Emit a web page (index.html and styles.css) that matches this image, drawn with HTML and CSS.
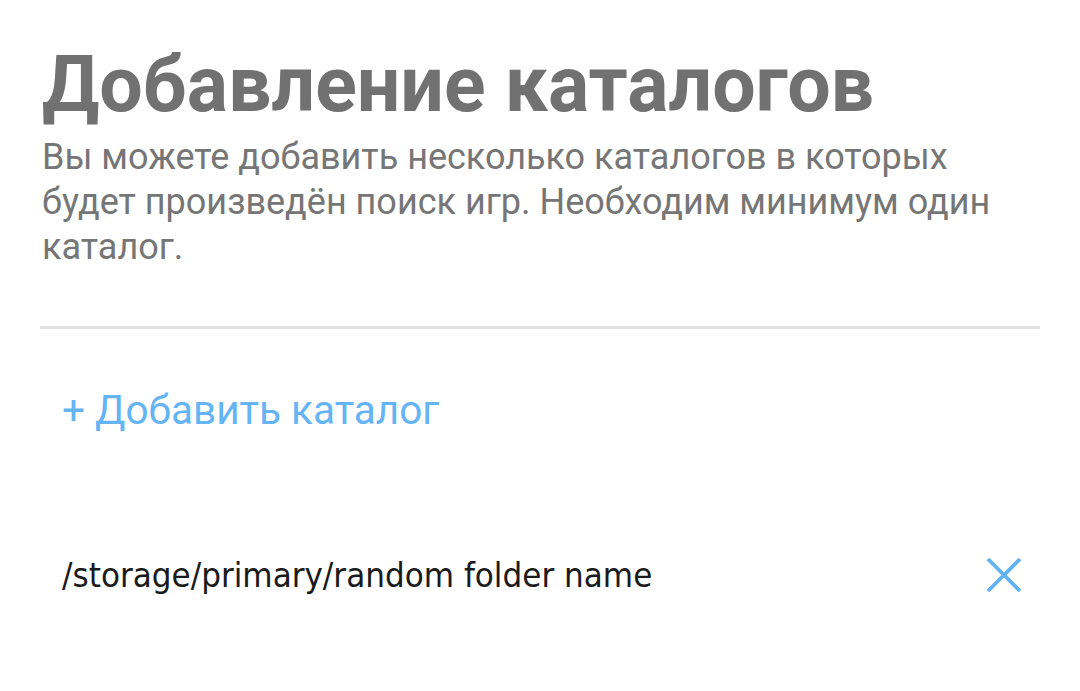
FILE: index.html
```html
<!DOCTYPE html>
<html lang="ru">
<head>
<meta charset="utf-8">
<link rel="stylesheet" href="styles.css">
</head>
<body>
<main class="page">
  <header class="head">
    <h1 class="title">Добавление каталогов</h1>
    <p class="desc">Вы можете добавить несколько каталогов в которых будет произведён поиск игр. Необходим минимум один каталог.</p>
  </header>
  <hr class="divider">
  <button class="add">+ Добавить каталог</button>
  <ul class="list">
    <li class="item">
      <span class="path">/storage/primary/random folder name</span>
      <button class="remove" aria-label="Удалить">
        <svg width="36" height="36" viewBox="0 0 36 36"><path d="M2 2 L34 34 M34 2 L2 34" stroke="#62b2f4" stroke-width="3.8" fill="none"/></svg>
      </button>
    </li>
  </ul>
</main>
</body>
</html>
```

FILE: styles.css
```css
* { box-sizing: border-box; }
html, body { margin: 0; padding: 0; background: #fff; }
body { font-family: Roboto, "Noto Sans", sans-serif; }
.page { padding: 40px 40px 0 40px; }
.head { padding-left: 2px; }
.title {
  margin: 0;
  font-size: 77px;
  font-weight: 700;
  color: #717171;
  line-height: 90px;
}
.desc {
  margin: 5px 0 0 0;
  font-size: 36px;
  line-height: 45px;
  color: #767676;
  max-width: 990px;
}
.divider {
  margin: 56px 0 0 0;
  border: 0;
  height: 3px;
  background: #e2e2e2;
}
.add {
  display: block;
  margin: 51px 0 0 0;
  padding: 0 0 0 22px;
  border: 0;
  background: none;
  font-family: Roboto, sans-serif;
  font-size: 40.5px;
  color: #64b4f6;
  line-height: 60px;
}
.list { list-style: none; margin: 110px 0 0 0; padding: 0; }
.item {
  display: flex;
  align-items: center;
  justify-content: space-between;
  padding: 0 18px 0 22px;
}
.path {
  font-family: "DejaVu Sans Condensed", "Liberation Sans Narrow", "Roboto Condensed", sans-serif;
  font-size: 34.6px;
  line-height: 50px;
  color: #1a1a1a;
}
.remove { border: 0; background: none; padding: 0; display: flex; }
```
